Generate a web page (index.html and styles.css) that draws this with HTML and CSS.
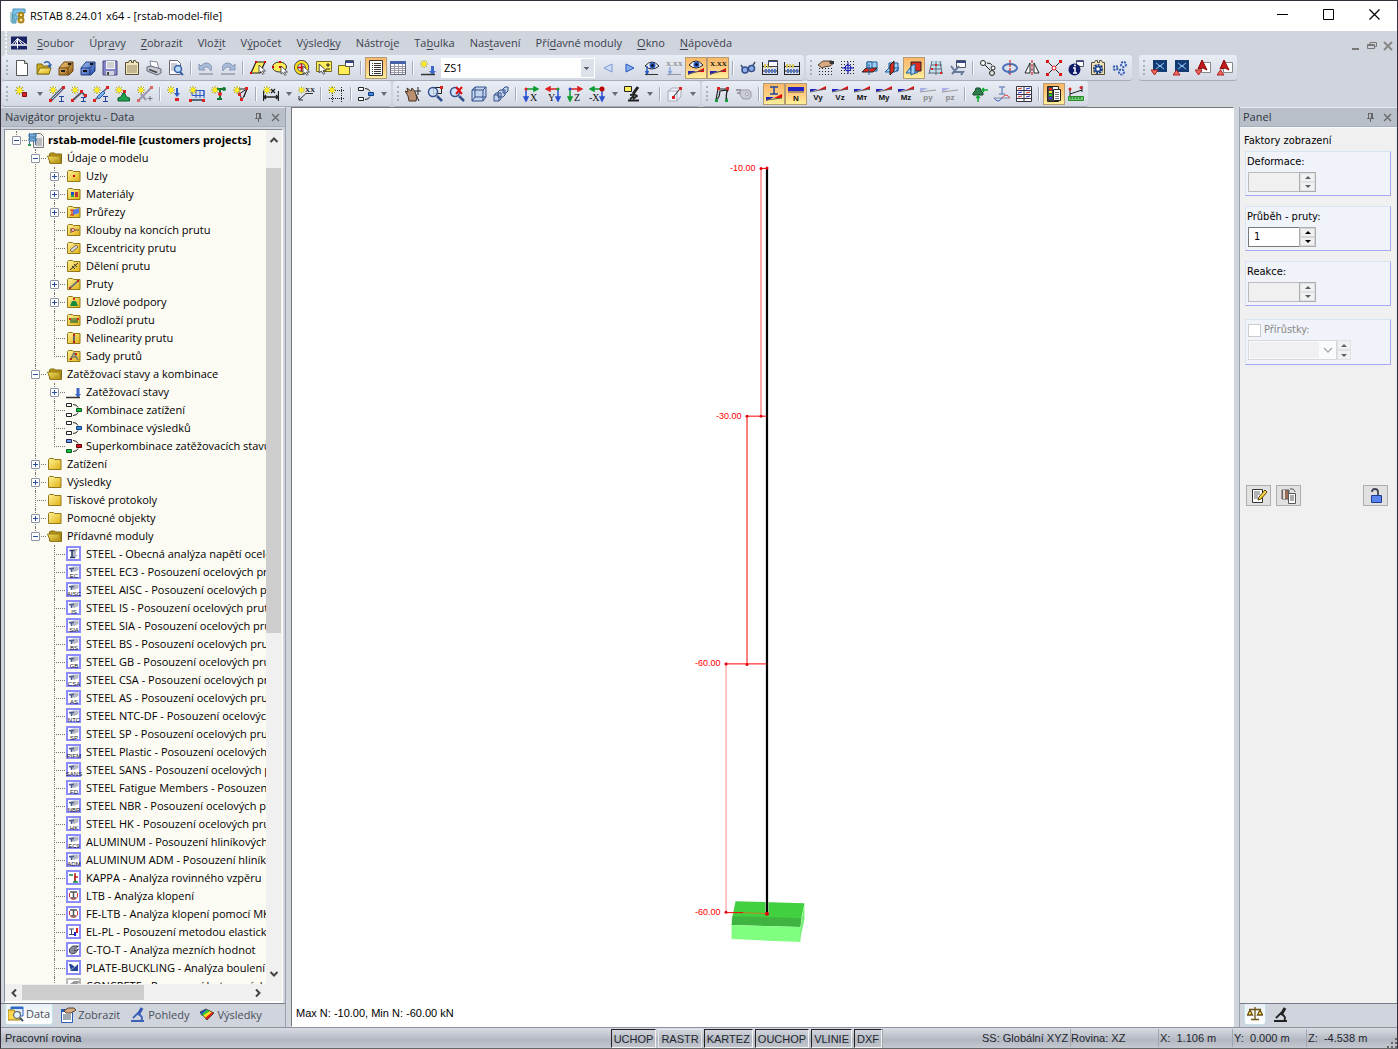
FILE: index.html
```html
<!DOCTYPE html>
<html lang="cs">

<head>
    <meta charset="UTF-8">
    <meta name="viewport" content="width=device-width, initial-scale=1.0">
    <title>RSTAB 8.24.01 x64 - [rstab-model-file]</title>
    <link rel="stylesheet" href="styles.css">
</head>

<body>
    <!-- Ikony -->
    <svg class="sprite" aria-hidden="true">
        <defs>
            <linearGradient id="gFolder" x1="0" y1="0" x2="1" y2="1">
                <stop offset="0" stop-color="#fff39a" />
                <stop offset="1" stop-color="#e0b010" />
            </linearGradient>
            <linearGradient id="gOpen" x1="0" y1="0" x2="1" y2="1">
                <stop offset="0" stop-color="#f7e060" />
                <stop offset="1" stop-color="#a88408" />
            </linearGradient>
            <linearGradient id="gBrown" x1="0" y1="0" x2="1" y2="1">
                <stop offset="0" stop-color="#ffd27a" />
                <stop offset="1" stop-color="#8a5510" />
            </linearGradient>
            <linearGradient id="gBlue" x1="0" y1="0" x2="1" y2="1">
                <stop offset="0" stop-color="#a9c4f5" />
                <stop offset="1" stop-color="#2148a8" />
            </linearGradient>
        </defs>

        <symbol id="star" viewBox="0 0 8 8"><path d="M4 0v8M0 4h8M1 1l6 6M7 1L1 7" stroke="#b5a800" /><circle cx="4" cy="4" r="2.2" fill="#ffee20" /></symbol>
        <symbol id="logo" viewBox="0 0 16 16"><path d="M3 1h12v4h-9v3h5v3H6v4H2z" fill="#7ec4e8" stroke="#4c8fb5" /><path d="M1 4v10M4 6v8" stroke="#4c9a9a" /><circle cx="11" cy="7" r="2.2" fill="#ffe680" stroke="#a8821a" stroke-width="2" /><circle cx="11" cy="12" r="2.5" fill="#ffe680" stroke="#a8821a" stroke-width="2" /></symbol>
        <symbol id="bridge" viewBox="0 0 16 13"><path d="M0 0h16v13H0z" fill="#1b2566" /><path d="M0 8.500h16" stroke="#fff" stroke-width="1.500" /><path d="M6.500 2v10M1 8l5.500-6L15 8M6.500 2L11 8M6.500 3L4 8" stroke="#fff" fill="none" /></symbol>
        <symbol id="new" viewBox="0 0 16 16"><path d="M2.500.5h8l3 3v12h-11z" fill="#fff" stroke="#555" /><path d="M10.500.5v3h3" fill="#ddd" stroke="#555" /></symbol>
        <symbol id="open" viewBox="0 0 16 16"><path d="M1 4h5l1 2h6v8H1z" fill="#c9a820" stroke="#80701a" /><path d="M1 14l3-6h11l-2 6z" fill="url(#gFolder)" stroke="#80701a" /><path d="M8 3q4-3 6 1v3M12 5l2 2 1-3" fill="none" stroke="#3565b0" stroke-width="1.5" /></symbol>
        <symbol id="cabBrown" viewBox="0 0 16 16"><path d="M1 8l5-6 9 0v9l-4 4H1z" fill="url(#gBrown)" stroke="#6d4512" /><path d="M1 8h9v7M10 8l5-6" fill="none" stroke="#6d4512" /><path d="M3 11h4M10 4h3" stroke="#222" stroke-width="2" /></symbol>
        <symbol id="cabBlue" viewBox="0 0 16 16"><path d="M1 8l5-6 9 0v9l-4 4H1z" fill="url(#gBlue)" stroke="#1e3c80" /><path d="M1 8h9v7M10 8l5-6" fill="none" stroke="#1e3c80" /><path d="M3 11h4M10 4h3" stroke="#111" stroke-width="2" /></symbol>
        <symbol id="save" viewBox="0 0 16 16"><path d="M1 1h14v14H1z" fill="#8484c8" stroke="#4c4c80" /><path d="M4 1h9v8H4z" fill="#f4f4f8" /><path d="M5 3h7M5 5h7M5 7h7" stroke="#aaa" /><path d="M4 11h8v4H4z" fill="#d4d4dc" /><path d="M5 12h2v3H5z" fill="#444" /></symbol>
        <symbol id="report" viewBox="0 0 16 16"><path d="M1.500 2.500h3l1-2h2v2h2v-2h2l1 2h2v12h-13z" fill="#f0e2bd" stroke="#554c33" /><path d="M3 6h10M3 8h10M3 10h10M3 12h10" stroke="#998b66" /></symbol>
        <symbol id="print" viewBox="0 0 16 16"><path d="M4 1l7 1 2 7-8-2z" fill="#fff" stroke="#889" /><path d="M1 7l4-1 10 3v4l-4 2L1 11z" fill="#c5cad5" stroke="#667" /><path d="M3 9.500l8 3" stroke="#444" stroke-width="1.500" /></symbol>
        <symbol id="preview" viewBox="0 0 16 16"><path d="M1.500.5h8l3 3v11h-11z" fill="#fff" stroke="#667" /><path d="M3 4h6M3 6h7M3 8h4M3 10h3" stroke="#99a" /><circle cx="10" cy="9" r="3.500" fill="#b8dcfa" stroke="#3560a8" stroke-width="1.500" /><path d="M12 12l3 3" stroke="#3560a8" stroke-width="2" /></symbol>
        <symbol id="undo" viewBox="0 0 16 16"><path d="M1 4v6h6L5 8q5-3 8 3 2-7-4-8-4 0-6 3z" fill="#a9bcda" stroke="#8698b5" /><path d="M1 14h14" stroke="#778" /></symbol>
        <symbol id="redo" viewBox="0 0 16 16"><path d="M15 4v6H9l2-2q-5-3-8 3-2-7 4-8 4 0 6 3z" fill="#a9bcda" stroke="#8698b5" /><path d="M1 14h14" stroke="#778" /></symbol>
        <symbol id="cursor" viewBox="0 0 8 10"><path d="M1 0v8l2-1.500 2 3 1-1-1.500-2.500h3z" fill="#fff" stroke="#333" stroke-width=".8" /></symbol>
        <symbol id="selArea" viewBox="0 0 16 16"><path d="M6 2h9l-5 11H1z" fill="#ffee58" stroke="#222" stroke-width="1.200" /><path d="M5 1h2v2H5zM14 1h2v2h-2zM0 12h2v2H0z" fill="#d00" /><use href="#cursor" x="8" y="5" width="8" height="10" /></symbol>
        <symbol id="selEllipse" viewBox="0 0 16 16"><ellipse cx="7.500" cy="7" rx="7" ry="5" fill="#ffee58" stroke="#333" /><path d="M7 1h2v2H7zM0 6h2v2H0zM7 6h2v2H7z" fill="#d00" /><use href="#cursor" x="8" y="6" width="8" height="10" /></symbol>
        <symbol id="selRing" viewBox="0 0 16 16"><circle cx="7.500" cy="7.500" r="5.500" fill="none" stroke="#333" stroke-width="4" /><circle cx="7.500" cy="7.500" r="5.500" fill="none" stroke="#ffdf20" stroke-width="2.500" /><path d="M7.500 4v7M4 7.500h7" stroke="#d00" stroke-width="1.500" /><use href="#cursor" x="8" y="6" width="8" height="10" /></symbol>
        <symbol id="selPm" viewBox="0 0 16 16"><path d="M.5 1.500h15v10H.5z" fill="#ffee58" stroke="#776c20" /><path d="M12 3v4M10 5h4M10 9h4" stroke="#222" /><use href="#cursor" x="2" y="4" width="9" height="11" /></symbol>
        <symbol id="selWin" viewBox="0 0 16 16"><path d="M.5 5.500h11v9H.5z" fill="#ffee58" stroke="#776c20" /><path d="M7.500.5h8v6h-8z" fill="#fff" stroke="#555" /><path d="M7 1h9v2H7z" fill="#34488a" /></symbol>
        <symbol id="list" viewBox="0 0 16 16"><path d="M1.500.5h13v15h-13z" fill="#fff" stroke="#333" /><path d="M4 3.500h1M4 5.500h1M4 7.500h1M4 9.500h1M4 11.500h1M4 13.500h1M6 3.500h7M6 5.500h7M6 7.500h7M6 9.500h7M6 11.500h7M6 13.500h7" stroke="#333" /></symbol>
        <symbol id="grid" viewBox="0 0 16 16"><path d="M.5 1.500h15v13H.5z" fill="#fff" stroke="#667" /><path d="M0 1h16v3H0z" fill="#4561a8" /><path d="M1 6.500h14M1 8.500h14M1 10.500h14M1 12.500h14M4.500 4v10M8.500 4v10M12.500 4v10" stroke="#99a" /></symbol>
        <symbol id="loadNew" viewBox="0 0 16 16"><use href="#star" width="8" height="8" /><path d="M11 6h3v5h2l-3.500 4L9 11h2z" fill="#3c68c8" /><path d="M1 14.500h14" stroke="#333" stroke-width="1.500" /></symbol>
        <symbol id="prev" viewBox="0 0 16 16"><path d="M12 4v8L4 8z" fill="#cfddf5" stroke="#7a9adb" /></symbol>
        <symbol id="next" viewBox="0 0 16 16"><path d="M4 4v8l8-4z" fill="#88aef0" stroke="#2456c0" /></symbol>
        <symbol id="eyeLoad" viewBox="0 0 16 16"><path d="M1 6q7-8 14 0-7 6-14 0z" fill="#f3f6ff" stroke="#222" /><circle cx="8.500" cy="5.500" r="3" fill="#2a5ac0" /><circle cx="8.500" cy="5.500" r="1.300" fill="#000" /><path d="M3 6v7M1.500 11L3 14l1.500-3" stroke="#2a5ac0" fill="none" stroke-width="1.500" /><path d="M1 14.500h13" stroke="#333" /></symbol>
        <symbol id="grayLoad" viewBox="0 0 16 16"><path d="M4 7v6M2.500 11L4 14l1.500-3" stroke="#8aa4dc" fill="none" stroke-width="1.500" /><path d="M1 14.500h14" stroke="#999" /></symbol>
        <symbol id="lowDiag" viewBox="0 0 16 16"><path d="M0 15v-4h8z" fill="#22b" /><path d="M8 12l8-4v4z" fill="#e00" /><path d="M0 14l16-4" stroke="#555" /></symbol>
        <symbol id="eyeDiag" viewBox="0 0 16 16"><path d="M1 5q7-8 14 0-7 6-14 0z" fill="#f3f6ff" stroke="#222" /><circle cx="8.500" cy="4.500" r="3" fill="#2a5ac0" /><circle cx="8.500" cy="4.500" r="1.300" fill="#000" /><use href="#lowDiag" width="16" height="16" /></symbol>
        <symbol id="glasses" viewBox="0 0 16 16"><path d="M1 5l3 5M15 2l-3 5" stroke="#456" fill="none" stroke-width="1.500" /><circle cx="5" cy="10" r="3" fill="#8fb0ea" stroke="#34508a" stroke-width="1.500" /><circle cx="11.500" cy="8.500" r="3" fill="#8fb0ea" stroke="#34508a" stroke-width="1.500" /></symbol>
        <symbol id="abacus" viewBox="0 0 16 16"><path d="M.5 2v13M15.500 2v13M0 6.500h16M0 11h16M0 14.500h16" stroke="#222" fill="none" /><path d="M3 4v4M6 4v4M9 4v4" stroke="#d8c860" stroke-width="2" /><path d="M4 9v4M7 9v4M10 9v4M13 9v4" stroke="#5578c0" stroke-width="2" /></symbol>
        <symbol id="abacusWin" viewBox="0 0 16 16"><use href="#abacus" width="16" height="16" /><path d="M6.500.5h9v6h-9z" fill="#fff" stroke="#444" /><path d="M6 1h10v1H6z" fill="#34488a" /></symbol>
        <symbol id="handGrid" viewBox="0 0 16 16"><path d="M1 8.500h15M1 11.500h15M1 14.500h15" stroke="#222" stroke-dasharray="1 2" /><path d="M0 5l5-4h9l2 2-4 3-6 1-2 1z" fill="#d9a982" stroke="#543" /><path d="M11 1h5v3h-4z" fill="#333" /></symbol>
        <symbol id="snapGrid" viewBox="0 0 16 16"><path d="M1 1.500h15M1 4.500h15M1 7.500h15M1 10.500h15M1 13.500h15" stroke="#222" stroke-dasharray="1 2" /><circle cx="8" cy="8" r="3" fill="#dfe6ff" stroke="#11a" /><path d="M8 2v12M2 8h12" stroke="#11a" /></symbol>
        <symbol id="planeXy" viewBox="0 0 16 16"><path d="M5 2h10v9H5z" fill="#9fd0f4" stroke="#1c5c9c" /><path d="M0 12l4-4h11l-4 4z" fill="#e02a20" stroke="#222" /><path d="M5 2h5v6H5z" fill="#9fd0f4" stroke="#1c5c9c" /><path d="M7 4v11" stroke="#1c5c9c" /></symbol>
        <symbol id="planeYz" viewBox="0 0 16 16"><path d="M5 3h9v8H5z" fill="#9fd0f4" stroke="#1c5c9c" /><path d="M1 12l4-4h10l-4 4z" fill="#9fd0f4" stroke="#1c5c9c" /><path d="M6 5l4-4v10l-4 4z" fill="#e02a20" stroke="#222" /></symbol>
        <symbol id="planeXz" viewBox="0 0 16 16"><path d="M0 13l4-5h11l-4 5z" fill="#9fd0f4" stroke="#1c5c9c" /><path d="M5 2h10v9H5z" fill="#e02a20" stroke="#222" /><path d="M5 6l4-2v9l-4 2z" fill="#9fd0f4" stroke="#1c5c9c" /></symbol>
        <symbol id="planeGrid" viewBox="0 0 16 16"><path d="M4 1h10l1 13H1z" fill="#bfe2ee" /><path d="M4 1l-3 13M8 1v14M12 1l2 13M3 5h11M2 9h12M1 13h14" stroke="#667" fill="none" /><path d="M7 4h2v2H7zM3 8h2v2H3zM12 12h2v2h-2z" fill="#d22" /></symbol>
        <symbol id="toolWin" viewBox="0 0 16 16"><path d="M6.500.5h9v7h-9z" fill="#fff" stroke="#556" /><path d="M6 1h10v2H6z" fill="#34488a" /><path d="M2 14l7-8M1 6l3 4M3 12h10l-2 3" stroke="#667a99" stroke-width="2" fill="none" /></symbol>
        <symbol id="moveCopy" viewBox="0 0 16 16"><circle cx="3" cy="3" r="2.500" fill="#fff" stroke="#222" /><circle cx="13" cy="8" r="2" fill="#fff" stroke="#222" /><circle cx="12" cy="13" r="2.500" fill="#ddd" stroke="#222" /><path d="M5 5l5 5M7 3q4 0 5 2" stroke="#222" fill="none" /></symbol>
        <symbol id="rotate" viewBox="0 0 16 16"><ellipse cx="8" cy="8" rx="7" ry="4" fill="none" stroke="#4a72b8" stroke-width="2" /><path d="M8 0v16" stroke="#c00" stroke-dasharray="3 1" /><path d="M6 14l4-2-4-2z" fill="#4a72b8" /></symbol>
        <symbol id="mirror" viewBox="0 0 16 16"><path d="M6 3v10H1zM10 3v10h5z" fill="#fff" stroke="#222" /><path d="M8 0v16" stroke="#c00" stroke-dasharray="3 1" /></symbol>
        <symbol id="cross" viewBox="0 0 16 16"><path d="M2 2l12 12M14 2L2 14" stroke="#222" /><path d="M0 0h3v3H0zM13 0h3v3h-3zM0 13h3v3H0zM13 13h3v3h-3z" fill="#d11" /><circle cx="8" cy="8" r="2" fill="#fff" stroke="#d11" /></symbol>
        <symbol id="info" viewBox="0 0 16 16"><path d="M8.500.5h7v6h-7z" fill="#fff" stroke="#556" /><path d="M8 1h8v1H8z" fill="#34488a" /><circle cx="6.500" cy="9.500" r="6" fill="#101c68" /><path d="M5 8h2v5M5 13h4" stroke="#fff" stroke-width="1.500" fill="none" /><circle cx="7" cy="5.500" r="1" fill="#fff" /></symbol>
        <symbol id="gearReport" viewBox="0 0 16 16"><use href="#report" width="16" height="16" /><circle cx="8" cy="9" r="4" fill="#fff" stroke="#1a4088" stroke-width="2" stroke-dasharray="2 1" /><circle cx="8" cy="9" r="2.500" fill="#fff" stroke="#1a4088" stroke-width="1.500" /></symbol>
        <symbol id="gears" viewBox="0 0 16 16"><g fill="#dce6ff" stroke="#3c60b0" stroke-width="2" stroke-dasharray="2 1"><circle cx="3.500" cy="8" r="2" /><circle cx="11.500" cy="4.500" r="2.500" /><circle cx="9.500" cy="12" r="2.500" /></g></symbol>
        <symbol id="cadImport" viewBox="0 0 16 16"><path d="M2 0h14v12H2z" fill="#143c74" /><path d="M5 3l8 6M13 3L5 9M7 6h4" stroke="#8cc4f4" /><path d="M0 10h7l-3.500 5z" fill="#f26a5c" stroke="#a22" /></symbol>
        <symbol id="cadExport" viewBox="0 0 16 16"><path d="M2 0h14v12H2z" fill="#143c74" /><path d="M5 3l8 6M13 3L5 9M7 6h4" stroke="#8cc4f4" /><path d="M0 15h7l-3.500-5z" fill="#f26a5c" stroke="#a22" /></symbol>
        <symbol id="acad" viewBox="0 0 16 16"><path d="M6.500 2.500h9v10h-9z" fill="#fff" stroke="#888" /><path d="M3 9l4-9 5 10-4-2z" fill="#c21c1c" stroke="#800" /></symbol>
        <symbol id="acadImport" viewBox="0 0 16 16"><use href="#acad" width="16" height="16" /><path d="M0 10h7l-3.500 5z" fill="#f26a5c" stroke="#a22" /></symbol>
        <symbol id="acadExport" viewBox="0 0 16 16"><use href="#acad" width="16" height="16" /><path d="M0 15h7l-3.500-5z" fill="#f26a5c" stroke="#a22" /></symbol>

        <symbol id="node" viewBox="0 0 16 16"><use href="#star" x="1" y="0" width="9" height="9" /><path d="M8.500 6.500h4v4h-4z" fill="#d22" stroke="#811" /></symbol>
        <symbol id="member" viewBox="0 0 16 16"><path d="M2 14L14 2" stroke="#556" stroke-width="3" /><path d="M2 14L14 2" stroke="#b8dcf5" /><use href="#star" width="8" height="8" /><path d="M13 0h3v3h-3zM0 13h3v3H0z" fill="#d22" /><path d="M10 10.500h5M12.500 10v5M10 15.500h5" stroke="#24449a" /></symbol>
        <symbol id="section" viewBox="0 0 16 16"><path d="M2 14L14 2" stroke="#556" stroke-width="1.500" /><path d="M4 11l6-6 2 2-6 6z" fill="#7ab4f0" stroke="#2a5ca8" /><use href="#star" width="8" height="8" /><path d="M13 0h3v3h-3zM0 13h3v3H0z" fill="#d22" /><path d="M10 10.500h5M12.500 10v5M10 15.500h5" stroke="#24449a" /></symbol>
        <symbol id="members" viewBox="0 0 16 16"><path d="M2 14l9-8 3 4" stroke="#556" stroke-width="2" fill="none" /><use href="#star" width="8" height="8" /><path d="M9 4h3v3H9zM0 13h3v3H0zM13 8h3v3h-3z" fill="#d22" /><path d="M10 11.500h5M12.500 11v4M10 15.500h5" stroke="#24449a" /></symbol>
        <symbol id="support" viewBox="0 0 16 16"><use href="#star" width="8" height="8" /><path d="M8 4h3v3H8z" fill="#d22" /><path d="M9.500 7l2 4 3 1v3H3v-3l3-1 2-4z" fill="#1fa04c" stroke="#0c5c28" /></symbol>
        <symbol id="memberGray" viewBox="0 0 16 16"><path d="M2 14L14 2M4 8l5 6" stroke="#99a" stroke-width="2" /><use href="#star" width="8" height="8" /><path d="M13 0h3v3h-3zM0 13h3v3H0z" fill="#d66" /><path d="M13 10v5M10.500 12.500h5" stroke="#778" /></symbol>
        <symbol id="nodeLoad" viewBox="0 0 16 16"><use href="#star" width="8" height="8" /><path d="M9 2h2v5h2l-3 4-3-4h2z" fill="#2b5cc8" /><path d="M8 12h4v3H8z" fill="#d22" /></symbol>
        <symbol id="memberLoad" viewBox="0 0 16 16"><path d="M3 4.500h12v5H3zM7 4v8M11 4v8M15 4v8" stroke="#2b5cc8" fill="none" /><use href="#star" width="8" height="8" /><path d="M2 14h12" stroke="#567" stroke-width="2" /><path d="M0 13h3v3H0zM13 13h3v3h-3z" fill="#d22" /></symbol>
        <symbol id="nodeDisp" viewBox="0 0 16 16"><path d="M6 3h8M9 4v9M6 13h5" stroke="#117a33" stroke-width="2" fill="none" /><use href="#star" width="8" height="8" /><circle cx="13" cy="3" r="2" fill="#117a33" /><circle cx="9" cy="8" r="2" fill="#d22" /></symbol>
        <symbol id="genLoad" viewBox="0 0 16 16"><path d="M5 3h9l-5 11zM6 8l8-5-3 8" stroke="#222" fill="none" /><use href="#star" width="8" height="8" /><path d="M12 1h3v3h-3zM7 12h3v3H7zM5 7h3v3H5z" fill="#d22" /></symbol>
        <symbol id="dim" viewBox="0 0 16 16"><path d="M.5 5v10M15.500 5v10M1 11h14M3 9l-2 2 2 2M13 9l2 2-2 2M8 3l4 4M12 3L8 7" stroke="#222" fill="none" stroke-width="1.300" /><use href="#star" width="8" height="8" /></symbol>
        <symbol id="comment" viewBox="0 0 16 16"><path d="M15 7.500H8L1 14M1 10v4h4" stroke="#333" fill="none" /><use href="#star" width="7" height="8" /></symbol>
        <symbol id="guide" viewBox="0 0 16 16"><path d="M1 4.500h15M1 12.500h15M4.500 1v15M13.500 1v15" stroke="#222" stroke-dasharray="1 1" fill="none" /><use href="#star" width="8" height="8" /></symbol>
        <symbol id="combo" viewBox="0 0 16 16"><path d="M.5 1.500h5v3h-5zM.5 11.500h5v3h-5z" fill="#fff" stroke="#222" /><path d="M7 2.500q4 0 5 3M7 13.500q4 0 5-3" stroke="#222" fill="none" /><path d="M10.500 6.500h5v3h-5z" fill="#3c8ce0" stroke="#113a80" /></symbol>
        <symbol id="hand" viewBox="0 0 16 16"><path d="M4 15l-1-5-3-5 3 1-1-4 4 3 1-3 3 4 2 5-1 4z" fill="#b98f70" stroke="#432" /><path d="M13 1v8M9.500 5h6.500M11 9l3 6" stroke="#222" /></symbol>
        <symbol id="zoomWin" viewBox="0 0 16 16"><path d="M6.500 1.500h8v6h-8z" fill="none" stroke="#222" /><circle cx="6" cy="6" r="4.500" fill="#cfe4fa" fill-opacity=".8" stroke="#34508a" stroke-width="1.500" /><path d="M10 10l5 5" stroke="#34508a" stroke-width="2.500" /><path d="M13 0h3v3h-3z" fill="#d22" /></symbol>
        <symbol id="zoomX" viewBox="0 0 16 16"><circle cx="6" cy="6" r="4.500" fill="#cfe4fa" stroke="#34508a" stroke-width="1.500" /><path d="M10 10l5 5" stroke="#34508a" stroke-width="2.500" /><path d="M7 1l6 7M13 1L7 8" stroke="#d11" stroke-width="2" /></symbol>
        <symbol id="cube" viewBox="0 0 16 16"><path d="M1 4l3-3h11v10l-3 4H1z" fill="#c3d4ee" stroke="#34508a" /><path d="M1 4h11v11M12 4l3-3M4 1v10h11M4 11l-3 4" fill="none" stroke="#34508a" /></symbol>
        <symbol id="cubes" viewBox="0 0 16 16"><path d="M10 3l2-2h3v4l-2 2h-3zM5 6l2-2h5v5l-2 2H5zM1 9l2-2h5v6l-2 2H1z" fill="#c3d4ee" stroke="#34508a" /><path d="M1 9h5v6" fill="none" stroke="#34508a" /></symbol>
        <symbol id="viewX" viewBox="0 0 16 16"><path d="M3 3h9M11 1l4 2-4 2z" stroke="#0c9c30" stroke-width="1.500" fill="#0c9c30" /><path d="M3 4v8M1 11l2 4 2-4z" stroke="#2a50d0" stroke-width="1.500" fill="#2a50d0" /><circle cx="3" cy="3" r="1.500" fill="#d22" /></symbol>
        <symbol id="viewY" viewBox="0 0 16 16"><path d="M13 3H4M5 1L1 3l4 2z" stroke="#d22" stroke-width="1.500" fill="#d22" /><path d="M13 4v8M11 11l2 4 2-4z" stroke="#2a50d0" stroke-width="1.500" fill="#2a50d0" /><circle cx="13" cy="3" r="1.500" fill="#0c9c30" /></symbol>
        <symbol id="viewZ" viewBox="0 0 16 16"><path d="M3 3h9M11 1l4 2-4 2z" stroke="#d22" stroke-width="1.500" fill="#d22" /><path d="M3 4v8M1 11l2 4 2-4z" stroke="#0c9c30" stroke-width="1.500" fill="#0c9c30" /><circle cx="3" cy="3" r="1.500" fill="#2a50d0" /></symbol>
        <symbol id="viewMx" viewBox="0 0 16 16"><path d="M13 3H4M5 1L1 3l4 2z" stroke="#0c9c30" stroke-width="1.500" fill="#0c9c30" /><path d="M13 4v8M11 11l2 4 2-4z" stroke="#2a50d0" stroke-width="1.500" fill="#2a50d0" /><circle cx="13" cy="3" r="2.500" fill="#b00" /></symbol>
        <symbol id="scopeNote" viewBox="0 0 16 16"><path d="M14 1l-5 7" stroke="#222" stroke-width="3" /><path d="M6 9q6-1 7 1l-4 3M4 14.500h11M6 13l4-3" stroke="#222" stroke-width="1.800" fill="none" /><path d="M.5.5h7v5h-7z" fill="#ffee58" stroke="#222" /></symbol>
        <symbol id="cubeEdit" viewBox="0 0 16 16"><path d="M1 5l4-3h9v8l-4 5H1zM1 5h9v10M10 5l4-3" fill="#eef2fa" stroke="#aab" /><path d="M6 11l7-8" stroke="#222" /><path d="M12 1h3v3h-3zM5 10h3v3H5z" fill="#d22" /></symbol>
        <symbol id="frame" viewBox="0 0 16 16"><path d="M2 14L4 3l9 0-1 11M3 14q3-4 3-9l8-1q-3 5-1 10" stroke="#222" fill="none" stroke-width="1.200" /><path d="M3 1h3v3H3zM12 1h3v3h-3z" fill="#d22" /><path d="M1 13h3v3H1zM11 13h3v3h-3z" fill="#199c3c" /></symbol>
        <symbol id="spray" viewBox="0 0 16 16"><path d="M4 4h9l2 2v5l-2 2H7L4 9z" fill="#c9ccd3" stroke="#99a" /><path d="M0 4h5M1 7h4" stroke="#99a" stroke-width="2" /><circle cx="11" cy="8" r="1.500" fill="#fff" stroke="#99a" /></symbol>
        <symbol id="secDiag" viewBox="0 0 16 16"><path d="M4 1h8M8 1v7M4 8h8" stroke="#24449a" stroke-width="1.500" /><path d="M0 15v-4h8z" fill="#22b" /><path d="M8 12l8-4v4z" fill="#e00" /><path d="M0 14l16-2" stroke="#555" /></symbol>
        <symbol id="diag" viewBox="0 0 16 16"><path d="M0 6V3h8z" fill="#2222c0" /><path d="M8 4l8-4v4z" fill="#e01010" /><path d="M0 6L16 3" stroke="#666" /></symbol>
        <symbol id="diagFlat" viewBox="0 0 16 16"><path d="M0 1h16v4H0z" fill="#2222c0" /><path d="M0 6h16" stroke="#555" /></symbol>
        <symbol id="diagGray" viewBox="0 0 16 16"><path d="M0 6V2h8z" fill="#aab0e8" /><path d="M0 6l16-2" stroke="#999" /></symbol>
        <symbol id="reaction" viewBox="0 0 16 16"><path d="M4 2h4l1 3 2 2v2H1V7l2-2z" fill="#2c7c4c" stroke="#154a2a" /><path d="M6 10v6M4 12l2-2 2 2M16 4h-5M12 2l-2 2 2 2" stroke="#0ca82c" stroke-width="1.500" fill="none" /></symbol>
        <symbol id="secWave" viewBox="0 0 16 16"><path d="M5 1h6M8 1v7M5 8h6" stroke="#7a92c4" stroke-width="1.500" /><path d="M0 12h16" stroke="#88a" /><path d="M0 12q4 6 8 0" stroke="#46c" fill="none" /><path d="M8 12q4-6 8 0" stroke="#d44" fill="none" /></symbol>
        <symbol id="tables" viewBox="0 0 16 16"><path d="M.5.5h15v15H.5zM8 0v16M0 4.500h16M0 8.500h16M0 12.500h16" fill="#fff" stroke="#334" /><path d="M2 3l4-1M10 7l4-1M2 11l4-1" stroke="#d22" /><path d="M10 3l4-1M2 7l4-1M10 11l4-1" stroke="#22c" /></symbol>
        <symbol id="colorPanel" viewBox="0 0 16 16"><path d="M1.500.5h11v15h-11z" fill="#fff" stroke="#222" /><path d="M2 1h5v14H2z" fill="#444" /><path d="M3 3h3" stroke="#e22" stroke-width="2" /><path d="M3 6h3" stroke="#ee2" stroke-width="2" /><path d="M3 9h3" stroke="#2c2" stroke-width="2" /><path d="M3 12h3" stroke="#24e" stroke-width="2" /><path d="M7.500 3.500h7v11h-7z" fill="#fff" stroke="#222" /><path d="M9 6.500h4M9 8.500h4M9 10.500h4M9 12.500h4" stroke="#777" /></symbol>
        <symbol id="ruler" viewBox="0 0 16 16"><path d="M2 8l12-4M2 4v6M14 0v6" stroke="#222" /><circle cx="2" cy="3" r="1.500" fill="#d22" /><circle cx="13" cy="1.500" r="1.500" fill="#d22" /><path d="M.5 10.500h15v4H.5z" fill="#6cd06c" stroke="#2a8a2a" /><path d="M3 11v2M6 11v2M9 11v2M12 11v2" stroke="#185a18" /></symbol>

        <symbol id="folder" viewBox="0 0 16 16"><path d="M1.500 3.500l1-1h4l1 1h6.500v10h-12.500z" fill="url(#gFolder)" stroke="#94791c" /></symbol>
        <symbol id="folderOpen" viewBox="0 0 16 16"><path d="M2.500 4l1-1h4l1 1h6v9h-12z" fill="#b8960c" stroke="#7e6914" /><path d="M3.500 13.500L.5 6h12l2 7.500z" fill="url(#gOpen)" stroke="#94791c" /></symbol>
        <symbol id="project" viewBox="0 0 16 16"><path d="M5.500 1.500h7l3 3v11h-10z" fill="#eee" stroke="#777" /><path d="M8 7h6M8 9h6M8 11h6M8 13h6" stroke="#888" /><path d="M1 2h7v3H1zM1 6h7v3H1z" fill="#7ab2dc" stroke="#3f75a8" /><path d="M1.500 1v13M7.500 1v12" stroke="#3f75a8" /><path d="M0 12h3v2H0z" fill="#2a9a5a" /></symbol>
        <symbol id="loadCase" viewBox="0 0 16 16"><path d="M10.500 4h3v6h1.500l-3 4-3-4h1.500z" fill="#3c68c8" /><path d="M0 13.500h14" stroke="#333" stroke-width="1.500" /></symbol>
        <symbol id="coG" viewBox="0 0 16 16"><path d="M.5 1.500h5v3h-5zM.5 11.500h5v3h-5z" fill="#fff" stroke="#222" /><path d="M7 2.500q4 0 5 3M7 13.500q4 0 5-3" stroke="#222" fill="none" /><path d="M10.500 6.500h5v3h-5z" fill="#18c040" stroke="#0a5c20" /></symbol>
        <symbol id="coR" viewBox="0 0 16 16"><path d="M.5 1.500h5v3h-5z" fill="#6aa4f4" stroke="#225" /><path d="M.5 11.500h5v3h-5z" fill="#18c040" stroke="#0a5c20" /><path d="M7 2.500q4 0 5 3M7 13.500q4 0 5-3" stroke="#222" fill="none" /><path d="M10.500 6.500h5v3h-5z" fill="#d01020" stroke="#600" /></symbol>
        <symbol id="mod" viewBox="0 0 16 16"><path d="M1 1h13v13H1z" fill="#fff" stroke="#8c8cff" stroke-width="2" /></symbol>
        <symbol id="beam" viewBox="0 0 16 16"><use href="#mod" width="16" height="16" /><path d="M5 4l4-1h3l-2 3v3h2l-3 3H6z" fill="#b4b8c4" /><path d="M3.500 4.500h5M6 5v6M4 11.500h5" stroke="#2a3c6c" stroke-width="1.500" /></symbol>
        <symbol id="beamTag" viewBox="0 0 16 16"><use href="#mod" width="16" height="16" /><path d="M3 5l4-2.500h5.500V6L8 8z" fill="#b4b8c4" /><path d="M3 4.500h5M5.500 5v3" stroke="#4a5c8c" stroke-width="1.500" /></symbol>
        <symbol id="kappa" viewBox="0 0 16 16"><use href="#mod" width="16" height="16" /><path d="M3 5h4M9 5v7M7 12h5" stroke="#148a3a" stroke-width="1.500" /><path d="M9 3v8M8 7h4" stroke="#c22" stroke-width="1.500" /></symbol>
        <symbol id="ltb" viewBox="0 0 16 16"><use href="#mod" width="16" height="16" /><path d="M4 4h7M7.500 4v6M5 10h5" stroke="#555" stroke-width="1.500" /><path d="M3.500 5v4q4 5 8 0V5" stroke="#c33" fill="none" /></symbol>
        <symbol id="elpl" viewBox="0 0 16 16"><use href="#mod" width="16" height="16" /><path d="M3 5h5M5.500 5v5M3 10.500h5" stroke="#446" /><path d="M8 8h2v4H8z" fill="#22c" /><path d="M10 4h2v5h-2z" fill="#d22" /></symbol>
        <symbol id="ctot" viewBox="0 0 16 16"><use href="#mod" width="16" height="16" /><path d="M3.500 7l3-3h6l-4 4v1l4-2-3 4-4 1-2-2z" fill="#888c98" stroke="#445" /></symbol>
        <symbol id="plate" viewBox="0 0 16 16"><use href="#mod" width="16" height="16" /><path d="M3 4h2l4 3 3-3v7H5z" fill="#24449a" /><path d="M4 11l7-6" stroke="#9ab" /></symbol>
        <symbol id="concrete" viewBox="0 0 16 16"><path d="M1 1h13v13H1z" fill="#fff" stroke="#bbb" stroke-width="2" /><path d="M4 6l4-3h6l-3 4H5z" fill="#999" /></symbol>

        <symbol id="navData" viewBox="0 0 16 16"><path d="M3 1h12v9H3z" fill="#dce8fa" stroke="#3068c8" /><path d="M3 1h12v2H3z" fill="#3068c8" /><path d="M0 4h6l1 2h5v8H0z" fill="#ffd84c" stroke="#a07c10" /><circle cx="9" cy="9" r="3.500" fill="#e6f4ff" stroke="#456" /><path d="M12 12l3 3" stroke="#456" stroke-width="2" /></symbol>
        <symbol id="navShow" viewBox="0 0 16 16"><path d="M1.500 2.500h11v13h-11z" fill="#fff" stroke="#2a5cb8" /><path d="M1 2h12v3H1z" fill="#2a5cb8" /><path d="M3 8h8M3 10h8M3 12h8" stroke="#456" /><path d="M4 4l4-3h6l2 2-5 3H6z" fill="#d9a982" stroke="#543" /></symbol>
        <symbol id="navView" viewBox="0 0 16 16"><path d="M12 1L8 8" stroke="#2f56b0" stroke-width="3" /><path d="M3 11l5-5 3 3q2 2 0 5M1 14h13" stroke="#3c62b8" stroke-width="1.800" fill="none" /></symbol>
        <symbol id="navRes" viewBox="0 0 16 16"><path d="M1 5l6-3 8 4-7 7z" fill="#ffdf20" /><path d="M1 5l6-3 1 1-6 5z" fill="#2050e0" /><path d="M8 3l3 1-8 5-1-1z" fill="#20c040" /><path d="M15 6l-7 7-2-2 7-6z" fill="#e02020" /><path d="M1 5l6-3 8 4-7 7z" fill="none" stroke="#333" stroke-width=".8" /></symbol>
        <symbol id="scales" viewBox="0 0 16 16"><path d="M8 1v12M4 13.500h8M2 3.500h12M3 4L.5 9h5zM13 4l-2.500 5h5z" stroke="#6c5414" fill="#ffe050" stroke-width="1.300" /></symbol>
        <symbol id="scope" viewBox="0 0 16 16"><path d="M12 1L8 8" stroke="#222" stroke-width="3" /><path d="M3 11l5-5 3 3q2 2 0 5M1 14h13" stroke="#222" stroke-width="1.800" fill="none" /></symbol>
        <symbol id="edit" viewBox="0 0 16 16"><path d="M1.500 1.500h10v13h-10z" fill="#fff" stroke="#333" /><path d="M3 4h6M3 6h6M3 8h4M3 10h4" stroke="#667" /><path d="M7 12l1-3 6-7 2 2-6 7z" fill="#ffd840" stroke="#554010" /></symbol>
        <symbol id="copyFrom" viewBox="0 0 16 16"><path d="M1 2h7v9H1z" fill="#9c6c54" stroke="#555" /><path d="M3 2v9" stroke="#ddd" stroke-width="2" /><path d="M7.500 5.500h7v10h-7z" fill="#fff" stroke="#555" /><path d="M9 8h4M9 10h4M9 12h4M9 1q4-1 5 3" stroke="#555" fill="none" /></symbol>
        <symbol id="lock" viewBox="0 0 16 16"><path d="M10 8V4q0-3-3-3T4 4" stroke="#445" stroke-width="1.800" fill="none" /><path d="M3.500 7.500h10v7h-10z" fill="#5a84ee" stroke="#1c3c90" /></symbol>
        <symbol id="pin" viewBox="0 0 9 9"><path d="M2.500 0v5M2 .5h5M5.500 0v5M6.500 0v5M1 5.500h7M4.500 6v3" stroke="#666" fill="none" /></symbol>
        <symbol id="x" viewBox="0 0 9 9"><path d="M1 1l7 7M8 1L1 8" stroke="#666" stroke-width="1.300" /></symbol>
        <symbol id="chev" viewBox="0 0 10 10"><path d="M1.500 7L5 3.500 8.500 7" stroke="#444" stroke-width="2" fill="none" /></symbol>
    </svg>

    <div class="window">
        <header class="titlebar">
            <svg class="icon"><use href="#logo" /></svg>
            <h1>RSTAB 8.24.01 x64 - [rstab-model-file]</h1>
            <div class="win-buttons">
                <button aria-label="Minimalizovat"><svg width="11" height="11"><path d="M0 5.500h11" stroke="#000" /></svg></button>
                <button aria-label="Maximalizovat"><svg width="11" height="11"><path d="M.5.5h10v10H.5z" stroke="#000" fill="none" /></svg></button>
                <button aria-label="Zavřít"><svg width="11" height="11"><path d="M.5.5l10 10M10.500.5l-10 10" stroke="#000" stroke-width="1.200" /></svg></button>
            </div>
        </header>

        <nav class="menubar">
            <svg class="icon"><use href="#bridge" /></svg>
            <a href="#"><u>S</u>oubor</a>
            <a href="#">Úpr<u>a</u>vy</a>
            <a href="#"><u>Z</u>obrazit</a>
            <a href="#">Vlož<u>i</u>t</a>
            <a href="#">V<u>ý</u>počet</a>
            <a href="#">Výsled<u>k</u>y</a>
            <a href="#">Nástro<u>j</u>e</a>
            <a href="#">Ta<u>b</u>ulka</a>
            <a href="#">Nas<u>t</u>avení</a>
            <a href="#">Pří<u>d</u>avné moduly</a>
            <a href="#"><u>O</u>kno</a>
            <a href="#"><u>N</u>ápověda</a>
            <div class="doc-buttons">
                <button aria-label="Minimalizovat okno"><svg width="10" height="10"><path d="M1 8h7" stroke="#777" stroke-width="2" /></svg></button>
                <button aria-label="Obnovit okno"><svg width="10" height="10"><path d="M3 3V1.500h6.500v4H8M.5 3.500h7v4h-7zM.5 4.500h7" stroke="#777" fill="none" /></svg></button>
                <button aria-label="Zavřít okno"><svg width="10" height="10"><path d="M1 1l8 8M9 1L1 9" stroke="#888" stroke-width="2" /></svg></button>
            </div>
        </nav>

        <div class="toolbars">
            <div class="toolbar">
                <button aria-label="Nový"><svg class="icon"><use href="#new" /></svg></button>
                <button aria-label="Otevřít"><svg class="icon"><use href="#open" /></svg></button>
                <button aria-label="Projekt"><svg class="icon"><use href="#cabBrown" /></svg></button>
                <button aria-label="Bloky"><svg class="icon"><use href="#cabBlue" /></svg></button>
                <button aria-label="Uložit"><svg class="icon"><use href="#save" /></svg></button>
                <button aria-label="Protokol"><svg class="icon"><use href="#report" /></svg></button>
                <button aria-label="Tisk"><svg class="icon"><use href="#print" /></svg></button>
                <button aria-label="Náhled"><svg class="icon"><use href="#preview" /></svg></button>
                <span class="sep"></span>
                <button aria-label="Zpět"><svg class="icon"><use href="#undo" /></svg></button>
                <button aria-label="Znovu"><svg class="icon"><use href="#redo" /></svg></button>
                <span class="sep"></span>
                <button aria-label="Výběr rovnoběžníkem"><svg class="icon"><use href="#selArea" /></svg></button>
                <button aria-label="Výběr elipsou"><svg class="icon"><use href="#selEllipse" /></svg></button>
                <button aria-label="Výběr prstencem"><svg class="icon"><use href="#selRing" /></svg></button>
                <button aria-label="Přidat k výběru"><svg class="icon"><use href="#selPm" /></svg></button>
                <button aria-label="Zvláštní výběr"><svg class="icon"><use href="#selWin" /></svg></button>
                <span class="sep"></span>
                <button class="active" aria-label="Navigátor"><svg class="icon"><use href="#list" /></svg></button>
                <button aria-label="Tabulka"><svg class="icon"><use href="#grid" /></svg></button>
                <span class="sep"></span>
                <button aria-label="Nový zatěžovací stav"><svg class="icon"><use href="#loadNew" /></svg></button>
                <select class="load-select" aria-label="Zatěžovací stav">
                    <option>ZS1</option>
                </select>
                <button aria-label="Předchozí"><svg class="icon"><use href="#prev" /></svg></button>
                <button aria-label="Další"><svg class="icon"><use href="#next" /></svg></button>
                <button aria-label="Zobrazit zatížení"><svg class="icon"><use href="#eyeLoad" /></svg></button>
                <button aria-label="Hodnoty zatížení"><svg class="icon" viewBox="0 0 16 16"><use href="#grayLoad" /><text x="0" y="6" class="svg-serif dim">X.XX</text></svg></button>
                <button class="active" aria-label="Zobrazit výsledky"><svg class="icon"><use href="#eyeDiag" /></svg></button>
                <button class="active" aria-label="Hodnoty výsledků"><svg class="icon" viewBox="0 0 16 16"><use href="#lowDiag" /><text x="0" y="6" class="svg-serif">X.XX</text></svg></button>
                <span class="sep"></span>
                <button aria-label="Parametry"><svg class="icon"><use href="#glasses" /></svg></button>
                <button aria-label="Spočítat"><svg class="icon"><use href="#abacusWin" /></svg></button>
                <button aria-label="Spočítat vše"><svg class="icon"><use href="#abacus" /></svg></button>
            </div>
            <div class="toolbar">
                <button aria-label="Pracovní rovina"><svg class="icon"><use href="#handGrid" /></svg></button>
                <button aria-label="Rastr"><svg class="icon"><use href="#snapGrid" /></svg></button>
                <button aria-label="Rovina XY"><svg class="icon"><use href="#planeXy" /></svg></button>
                <button aria-label="Rovina YZ"><svg class="icon"><use href="#planeYz" /></svg></button>
                <button class="active" aria-label="Rovina XZ"><svg class="icon"><use href="#planeXz" /></svg></button>
                <button aria-label="Vlastní rovina"><svg class="icon"><use href="#planeGrid" /></svg></button>
                <button aria-label="Nastavení roviny"><svg class="icon"><use href="#toolWin" /></svg></button>
                <span class="sep"></span>
                <button aria-label="Kopírovat"><svg class="icon"><use href="#moveCopy" /></svg></button>
                <button aria-label="Otočit"><svg class="icon"><use href="#rotate" /></svg></button>
                <button aria-label="Zrcadlit"><svg class="icon"><use href="#mirror" /></svg></button>
                <button aria-label="Spojit pruty"><svg class="icon"><use href="#cross" /></svg></button>
                <button aria-label="Informace"><svg class="icon"><use href="#info" /></svg></button>
                <button aria-label="Vlastnosti zobrazení"><svg class="icon"><use href="#gearReport" /></svg></button>
                <button aria-label="Možnosti"><svg class="icon"><use href="#gears" /></svg></button>
            </div>
            <div class="toolbar spaced">
                <button aria-label="Import Tekla"><svg class="icon"><use href="#cadImport" /></svg></button>
                <button aria-label="Export Tekla"><svg class="icon"><use href="#cadExport" /></svg></button>
                <button aria-label="Import AutoCAD"><svg class="icon"><use href="#acadImport" /></svg></button>
                <button aria-label="Export AutoCAD"><svg class="icon"><use href="#acadExport" /></svg></button>
            </div>
        </div>

        <div class="toolbars">
            <div class="toolbar">
                <button aria-label="Nový uzel"><svg class="icon"><use href="#node" /></svg></button>
                <button class="drop" aria-label="Další typy uzlů"></button>
                <button aria-label="Nový prut"><svg class="icon"><use href="#member" /></svg></button>
                <button aria-label="Spojité pruty"><svg class="icon"><use href="#members" /></svg></button>
                <button aria-label="Nový průřez"><svg class="icon"><use href="#section" /></svg></button>
                <button aria-label="Nová podpora"><svg class="icon"><use href="#support" /></svg></button>
                <button aria-label="Nová sada prutů"><svg class="icon"><use href="#memberGray" /></svg></button>
                <span class="sep"></span>
                <button aria-label="Zatížení na uzel"><svg class="icon"><use href="#nodeLoad" /></svg></button>
                <button aria-label="Zatížení na prut"><svg class="icon"><use href="#memberLoad" /></svg></button>
                <button aria-label="Deformace uzlu"><svg class="icon"><use href="#nodeDisp" /></svg></button>
                <button aria-label="Generovat zatížení"><svg class="icon"><use href="#genLoad" /></svg></button>
                <span class="sep"></span>
                <button aria-label="Kóta"><svg class="icon"><use href="#dim" /></svg></button>
                <button class="drop" aria-label="Další kóty"></button>
                <button aria-label="Komentář"><svg class="icon" viewBox="0 0 16 16"><use href="#comment" /><text x="7" y="6" class="svg-serif">XX</text></svg></button>
                <span class="sep"></span>
                <button aria-label="Vodicí linie"><svg class="icon"><use href="#guide" /></svg></button>
                <span class="sep"></span>
                <button aria-label="Kombinace"><svg class="icon"><use href="#combo" /></svg></button>
                <button class="drop" aria-label="Další kombinace"></button>
            </div>
            <div class="toolbar">
                <button aria-label="Posun"><svg class="icon"><use href="#hand" /></svg></button>
                <button aria-label="Zvětšit oknem"><svg class="icon"><use href="#zoomWin" /></svg></button>
                <button aria-label="Zobrazit vše"><svg class="icon"><use href="#zoomX" /></svg></button>
                <button aria-label="Izometrie"><svg class="icon"><use href="#cube" /></svg></button>
                <button aria-label="Předchozí pohled"><svg class="icon"><use href="#cubes" /></svg></button>
                <span class="sep"></span>
                <button aria-label="Pohled X"><svg class="icon" viewBox="0 0 16 16"><use href="#viewX" /><text x="7" y="15" class="svg-axis">X</text></svg></button>
                <button aria-label="Pohled Y"><svg class="icon" viewBox="0 0 16 16"><use href="#viewY" /><text x="3" y="15" class="svg-axis">Y</text></svg></button>
                <button aria-label="Pohled Z"><svg class="icon" viewBox="0 0 16 16"><use href="#viewZ" /><text x="7" y="15" class="svg-axis">Z</text></svg></button>
                <button aria-label="Pohled -X"><svg class="icon" viewBox="0 0 16 16"><use href="#viewMx" /><text x="0" y="15" class="svg-axis">-X</text></svg></button>
                <button class="drop" aria-label="Další pohledy"></button>
                <button aria-label="Viditelnost"><svg class="icon"><use href="#scopeNote" /></svg></button>
                <button class="drop" aria-label="Další viditelnosti"></button>
                <span class="sep"></span>
                <button aria-label="Řez"><svg class="icon"><use href="#cubeEdit" /></svg></button>
                <button class="drop" aria-label="Další řezy"></button>
            </div>
            <div class="toolbar">
                <button aria-label="Deformace"><svg class="icon"><use href="#frame" /></svg></button>
                <button aria-label="Renderování"><svg class="icon"><use href="#spray" /></svg></button>
                <span class="sep"></span>
                <button class="active" aria-label="Průběhy"><svg class="icon"><use href="#secDiag" /></svg></button>
                <button class="active" aria-label="N"><svg class="icon" viewBox="0 0 16 16"><use href="#diagFlat" /><text x="8" y="15" class="svg-f">N</text></svg></button>
                <button aria-label="Vy"><svg class="icon" viewBox="0 0 16 16"><use href="#diag" /><text x="8" y="14" class="svg-f">Vy</text></svg></button>
                <button aria-label="Vz"><svg class="icon" viewBox="0 0 16 16"><use href="#diag" /><text x="8" y="14" class="svg-f">Vz</text></svg></button>
                <button aria-label="MT"><svg class="icon" viewBox="0 0 16 16"><use href="#diag" /><text x="8" y="14" class="svg-f">Mт</text></svg></button>
                <button aria-label="My"><svg class="icon" viewBox="0 0 16 16"><use href="#diag" /><text x="8" y="14" class="svg-f">My</text></svg></button>
                <button aria-label="Mz"><svg class="icon" viewBox="0 0 16 16"><use href="#diag" /><text x="8" y="14" class="svg-f">Mz</text></svg></button>
                <button aria-label="py"><svg class="icon" viewBox="0 0 16 16"><use href="#diagGray" /><text x="8" y="14" class="svg-f dim">py</text></svg></button>
                <button aria-label="pz"><svg class="icon" viewBox="0 0 16 16"><use href="#diagGray" /><text x="8" y="14" class="svg-f dim">pz</text></svg></button>
                <span class="sep"></span>
                <button aria-label="Reakce"><svg class="icon"><use href="#reaction" /></svg></button>
                <button aria-label="Napětí"><svg class="icon"><use href="#secWave" /></svg></button>
                <button aria-label="Tabulky výsledků"><svg class="icon"><use href="#tables" /></svg></button>
                <span class="sep"></span>
                <button class="active" aria-label="Panel"><svg class="icon"><use href="#colorPanel" /></svg></button>
                <button aria-label="Měřit"><svg class="icon"><use href="#ruler" /></svg></button>
            </div>
        </div>

        <main class="workspace">
            <!-- Navigátor projektu -->
            <aside class="navigator">
                <div class="dock-header">
                    <h2>Navigátor projektu - Data</h2>
                    <button aria-label="Připnout"><svg><use href="#pin" /></svg></button>
                    <button aria-label="Zavřít panel"><svg><use href="#x" /></svg></button>
                </div>
                <div class="tree-frame">
                    <div class="tree-view">
                        <ul class="tree">
                            <li>
                                <div class="row"><span class="slot"><button class="exp" aria-label="Sbalit"></button></span><svg class="icon"><use href="#project" /></svg><b>rstab-model-file [customers projects]</b></div>
                                <ul>
                                    <li>
                                        <div class="row"><span class="slot"><button class="exp" aria-label="Sbalit"></button></span><svg class="icon"><use href="#folderOpen" /></svg>Údaje o modelu</div>
                                        <ul>
                                            <li><div class="row"><span class="slot"><button class="exp plus" aria-label="Rozbalit"></button></span><svg class="icon" viewBox="0 0 16 16"><use href="#folder" /><path d="M7 7h2v2H7z" fill="#d00" /></svg>Uzly</div></li>
                                            <li><div class="row"><span class="slot"><button class="exp plus" aria-label="Rozbalit"></button></span><svg class="icon" viewBox="0 0 16 16"><use href="#folder" /><path d="M5 6h3v3H5z" fill="#24c" /><path d="M5 9h3v2H5z" fill="#2a4" /><path d="M9 6h3v5H9z" fill="#b33" /></svg>Materiály</div></li>
                                            <li><div class="row"><span class="slot"><button class="exp plus" aria-label="Rozbalit"></button></span><svg class="icon" viewBox="0 0 16 16"><use href="#folder" /><path d="M7 6l6-2v5l-6 2z" fill="#5a7ce8" /><path d="M4 6h4M6 6v5M4 11h4" stroke="#c22" /></svg>Průřezy</div></li>
                                            <li><div class="row"><span class="slot"></span><svg class="icon" viewBox="0 0 16 16"><use href="#folder" /><path d="M5 6v5M6 8h7" stroke="#555" /><circle cx="7" cy="8" r="1.500" fill="#fff" stroke="#a33" /></svg>Klouby na koncích prutu</div></li>
                                            <li><div class="row"><span class="slot"></span><svg class="icon" viewBox="0 0 16 16"><use href="#folder" /><path d="M4 10l6-5 2 2-6 5z" fill="#ddd" stroke="#765" /></svg>Excentricity prutu</div></li>
                                            <li><div class="row"><span class="slot"></span><svg class="icon" viewBox="0 0 16 16"><use href="#folder" /><path d="M4 12l8-7M6 8l3 3M8 6l3 3" stroke="#333" /></svg>Dělení prutu</div></li>
                                            <li><div class="row"><span class="slot"><button class="exp plus" aria-label="Rozbalit"></button></span><svg class="icon" viewBox="0 0 16 16"><use href="#folder" /><path d="M4 12l8-7" stroke="#777" stroke-width="2" /><path d="M3 11h2v2H3zM11 4h2v2h-2z" fill="#b22" /></svg>Pruty</div></li>
                                            <li><div class="row"><span class="slot"><button class="exp plus" aria-label="Rozbalit"></button></span><svg class="icon" viewBox="0 0 16 16"><use href="#folder" /><path d="M6 7h4l2 5H4z" fill="#1a8a3c" /><path d="M7 4h2v2H7z" fill="#d22" /></svg>Uzlové podpory</div></li>
                                            <li><div class="row"><span class="slot"></span><svg class="icon" viewBox="0 0 16 16"><use href="#folder" /><path d="M4 7h9M5 8v3M7 8v3M9 8v3M11 8v3" stroke="#175c30" stroke-width="1.200" /><path d="M3 6h2v2H3zM11 6h2v2h-2z" fill="#d22" /></svg>Podloží prutu</div></li>
                                            <li><div class="row"><span class="slot"></span><svg class="icon" viewBox="0 0 16 16"><use href="#folder" /><path d="M8 4v9" stroke="#666" stroke-width="2" /><path d="M7 4h2v2H7zM7 11h2v2H7z" fill="#b22" /></svg>Nelinearity prutu</div></li>
                                            <li><div class="row"><span class="slot"></span><svg class="icon" viewBox="0 0 16 16"><use href="#folder" /><path d="M4 12l4-7 4 7M5 9h6" stroke="#777" stroke-width="1.500" fill="none" /><path d="M9 5h2v2H9zM4 10h2v2H4z" fill="#b22" /></svg>Sady prutů</div></li>
                                        </ul>
                                    </li>
                                    <li>
                                        <div class="row"><span class="slot"><button class="exp" aria-label="Sbalit"></button></span><svg class="icon"><use href="#folderOpen" /></svg>Zatěžovací stavy a kombinace</div>
                                        <ul>
                                            <li><div class="row"><span class="slot"><button class="exp plus" aria-label="Rozbalit"></button></span><svg class="icon"><use href="#loadCase" /></svg>Zatěžovací stavy</div></li>
                                            <li><div class="row"><span class="slot"></span><svg class="icon"><use href="#coG" /></svg>Kombinace zatížení</div></li>
                                            <li><div class="row"><span class="slot"></span><svg class="icon"><use href="#combo" /></svg>Kombinace výsledků</div></li>
                                            <li><div class="row"><span class="slot"></span><svg class="icon"><use href="#coR" /></svg>Superkombinace zatěžovacích stavů</div></li>
                                        </ul>
                                    </li>
                                    <li><div class="row"><span class="slot"><button class="exp plus" aria-label="Rozbalit"></button></span><svg class="icon"><use href="#folder" /></svg>Zatížení</div></li>
                                    <li><div class="row"><span class="slot"><button class="exp plus" aria-label="Rozbalit"></button></span><svg class="icon"><use href="#folder" /></svg>Výsledky</div></li>
                                    <li><div class="row"><span class="slot"></span><svg class="icon"><use href="#folder" /></svg>Tiskové protokoly</div></li>
                                    <li><div class="row"><span class="slot"><button class="exp plus" aria-label="Rozbalit"></button></span><svg class="icon"><use href="#folder" /></svg>Pomocné objekty</div></li>
                                    <li>
                                        <div class="row"><span class="slot"><button class="exp" aria-label="Sbalit"></button></span><svg class="icon"><use href="#folderOpen" /></svg>Přídavné moduly</div>
                                        <ul>
                                            <li><div class="row"><span class="slot"></span><svg class="icon"><use href="#beam" /></svg>STEEL - Obecná analýza napětí ocelových prutů</div></li>
                                            <li><div class="row"><span class="slot"></span><svg class="icon" viewBox="0 0 16 16"><use href="#beamTag" /><text x="8" y="14" class="tag">EC</text></svg>STEEL EC3 - Posouzení ocelových prutů</div></li>
                                            <li><div class="row"><span class="slot"></span><svg class="icon" viewBox="0 0 16 16"><use href="#beamTag" /><text x="8" y="14" class="tag">AISC</text></svg>STEEL AISC - Posouzení ocelových prutů</div></li>
                                            <li><div class="row"><span class="slot"></span><svg class="icon" viewBox="0 0 16 16"><use href="#beamTag" /><text x="8" y="14" class="tag">IS</text></svg>STEEL IS - Posouzení ocelových prutů</div></li>
                                            <li><div class="row"><span class="slot"></span><svg class="icon" viewBox="0 0 16 16"><use href="#beamTag" /><text x="8" y="14" class="tag">SIA</text></svg>STEEL SIA - Posouzení ocelových prutů</div></li>
                                            <li><div class="row"><span class="slot"></span><svg class="icon" viewBox="0 0 16 16"><use href="#beamTag" /><text x="8" y="14" class="tag">BS</text></svg>STEEL BS - Posouzení ocelových prutů</div></li>
                                            <li><div class="row"><span class="slot"></span><svg class="icon" viewBox="0 0 16 16"><use href="#beamTag" /><text x="8" y="14" class="tag">GB</text></svg>STEEL GB - Posouzení ocelových prutů</div></li>
                                            <li><div class="row"><span class="slot"></span><svg class="icon" viewBox="0 0 16 16"><use href="#beamTag" /><text x="8" y="14" class="tag">CSA</text></svg>STEEL CSA - Posouzení ocelových prutů</div></li>
                                            <li><div class="row"><span class="slot"></span><svg class="icon" viewBox="0 0 16 16"><use href="#beamTag" /><text x="8" y="14" class="tag">AS</text></svg>STEEL AS - Posouzení ocelových prutů</div></li>
                                            <li><div class="row"><span class="slot"></span><svg class="icon" viewBox="0 0 16 16"><use href="#beamTag" /><text x="8" y="14" class="tag">NTC</text></svg>STEEL NTC-DF - Posouzení ocelových prutů</div></li>
                                            <li><div class="row"><span class="slot"></span><svg class="icon" viewBox="0 0 16 16"><use href="#beamTag" /><text x="8" y="14" class="tag">SP</text></svg>STEEL SP - Posouzení ocelových prutů</div></li>
                                            <li><div class="row"><span class="slot"></span><svg class="icon" viewBox="0 0 16 16"><use href="#beamTag" /><text x="8" y="14" class="tag">PIFM</text></svg>STEEL Plastic - Posouzení ocelových prutů</div></li>
                                            <li><div class="row"><span class="slot"></span><svg class="icon" viewBox="0 0 16 16"><use href="#beamTag" /><text x="8" y="14" class="tag">SANS</text></svg>STEEL SANS - Posouzení ocelových prutů</div></li>
                                            <li><div class="row"><span class="slot"></span><svg class="icon" viewBox="0 0 16 16"><use href="#beamTag" /><text x="8" y="14" class="tag">FD</text></svg>STEEL Fatigue Members - Posouzení na únavu</div></li>
                                            <li><div class="row"><span class="slot"></span><svg class="icon" viewBox="0 0 16 16"><use href="#beamTag" /><text x="8" y="14" class="tag">NBR</text></svg>STEEL NBR - Posouzení ocelových prutů</div></li>
                                            <li><div class="row"><span class="slot"></span><svg class="icon" viewBox="0 0 16 16"><use href="#beamTag" /><text x="8" y="14" class="tag">HK</text></svg>STEEL HK - Posouzení ocelových prutů</div></li>
                                            <li><div class="row"><span class="slot"></span><svg class="icon" viewBox="0 0 16 16"><use href="#beamTag" /><text x="8" y="14" class="tag">EC9</text></svg>ALUMINUM - Posouzení hliníkových prutů</div></li>
                                            <li><div class="row"><span class="slot"></span><svg class="icon" viewBox="0 0 16 16"><use href="#beamTag" /><text x="8" y="14" class="tag">ADM</text></svg>ALUMINUM ADM - Posouzení hliníkových prutů</div></li>
                                            <li><div class="row"><span class="slot"></span><svg class="icon"><use href="#kappa" /></svg>KAPPA - Analýza rovinného vzpěru</div></li>
                                            <li><div class="row"><span class="slot"></span><svg class="icon"><use href="#ltb" /></svg>LTB - Analýza klopení</div></li>
                                            <li><div class="row"><span class="slot"></span><svg class="icon"><use href="#ltb" /></svg>FE-LTB - Analýza klopení pomocí MKP</div></li>
                                            <li><div class="row"><span class="slot"></span><svg class="icon"><use href="#elpl" /></svg>EL-PL - Posouzení metodou elasticky-plasticky</div></li>
                                            <li><div class="row"><span class="slot"></span><svg class="icon"><use href="#ctot" /></svg>C-TO-T - Analýza mezních hodnot</div></li>
                                            <li><div class="row"><span class="slot"></span><svg class="icon"><use href="#plate" /></svg>PLATE-BUCKLING - Analýza boulení</div></li>
                                            <li><div class="row"><span class="slot"></span><svg class="icon"><use href="#concrete" /></svg>CONCRETE - Posouzení betonových prutů</div></li>
                                        </ul>
                                    </li>
                                </ul>
                            </li>
                        </ul>
                    </div>
                    <div class="scroll-v">
                        <button aria-label="Nahoru"><svg><use href="#chev" /></svg></button>
                        <div class="thumb"></div>
                        <button aria-label="Dolů"><svg class="down"><use href="#chev" /></svg></button>
                    </div>
                    <div class="scroll-h">
                        <button aria-label="Vlevo"><svg class="left"><use href="#chev" /></svg></button>
                        <div class="thumb"></div>
                        <button aria-label="Vpravo"><svg class="right"><use href="#chev" /></svg></button>
                    </div>
                </div>
                <div class="tabs">
                    <button class="current"><svg class="icon"><use href="#navData" /></svg>Data</button>
                    <button><svg class="icon"><use href="#navShow" /></svg>Zobrazit</button>
                    <button><svg class="icon"><use href="#navView" /></svg>Pohledy</button>
                    <button><svg class="icon"><use href="#navRes" /></svg>Výsledky</button>
                </div>
            </aside>

            <!-- Model s průběhem normálových sil -->
            <section class="canvas">
                <svg class="model" viewBox="-1 0 942 917">
                    <path d="M443 793l69 2-4 20-69-2z" fill="#40d040" />
                    <path d="M440 808l69 2-1 9-69-2z" fill="#40b440" />
                    <path d="M439 817l69 2v15l-69-3z" fill="#80ff80" />
                    <path d="M508 819l4-24v16l-5 23z" fill="#70f070" />
                    <path d="M474.500 60v745" stroke="#c8c8c8" stroke-width="3" />
                    <path d="M474.500 59v746" stroke="#000" stroke-width="2" />
                    <g fill="none" stroke="#f00">
                        <path d="M474 59.500h-6M468 307.500h6M454 307.500h14M454 555.500h20M433 555.500h21M433 804.500h18" />
                        <path d="M468.500 59v248" stroke="#ff5050" />
                        <path d="M454.500 307v248" />
                        <path d="M433.500 555v249" stroke="#ff8c8c" />
                    </g>
                    <path d="M451 804.500l24 1" stroke="#c08020" />
                    <g fill="#e00010">
                        <circle cx="474.500" cy="59" r="1.500" /><circle cx="468.500" cy="59.500" r="1.500" /><circle cx="468.500" cy="307.500" r="1.500" />
                        <circle cx="454.500" cy="307.500" r="1.500" /><circle cx="454.500" cy="556" r="1.500" /><circle cx="433.500" cy="555.500" r="1.500" />
                        <circle cx="433.500" cy="804" r="1.500" /><circle cx="474.500" cy="805.500" r="2" />
                    </g>
                    <g class="values">
                        <text x="463" y="62">-10.00</text>
                        <text x="449" y="310">-30.00</text>
                        <text x="428" y="558">-60.00</text>
                        <text x="428" y="807">-60.00</text>
                    </g>
                </svg>
                <p>Max N: -10.00, Min N: -60.00 kN</p>
            </section>

            <!-- Ovládací panel -->
            <aside class="panel">
                <div class="dock-header">
                    <h2>Panel</h2>
                    <button aria-label="Připnout"><svg><use href="#pin" /></svg></button>
                    <button aria-label="Zavřít panel"><svg><use href="#x" /></svg></button>
                </div>
                <div class="panel-body">
                    <h3>Faktory zobrazení</h3>
                    <div class="group">
                        <label for="deformace">Deformace:</label>
                        <div class="spin">
                            <input type="text" id="deformace" disabled>
                            <div class="arrows"><button disabled aria-label="Více"></button><button disabled aria-label="Méně"></button></div>
                        </div>
                    </div>
                    <div class="group">
                        <label for="prubeh">Průběh - pruty:</label>
                        <div class="spin">
                            <input type="text" id="prubeh" value="1">
                            <div class="arrows"><button aria-label="Více"></button><button aria-label="Méně"></button></div>
                        </div>
                    </div>
                    <div class="group">
                        <label for="reakce">Reakce:</label>
                        <div class="spin">
                            <input type="text" id="reakce" disabled>
                            <div class="arrows"><button disabled aria-label="Více"></button><button disabled aria-label="Méně"></button></div>
                        </div>
                    </div>
                    <div class="group increments">
                        <label><input type="checkbox" disabled>Přírůstky:</label>
                        <div class="spin">
                            <div class="combo">
                                <select disabled aria-label="Přírůstky"></select>
                                <svg width="10" height="6"><path d="M1 1l4 4 4-4" stroke="#aaa" stroke-width="1.300" fill="none" /></svg>
                            </div>
                            <div class="arrows"><button disabled aria-label="Více"></button><button disabled aria-label="Méně"></button></div>
                        </div>
                    </div>
                    <div class="panel-tools">
                        <button aria-label="Upravit"><svg class="icon"><use href="#edit" /></svg></button>
                        <button aria-label="Kopírovat nastavení"><svg class="icon"><use href="#copyFrom" /></svg></button>
                        <button aria-label="Odemknout"><svg class="icon"><use href="#lock" /></svg></button>
                    </div>
                </div>
                <div class="tabs">
                    <button class="current" aria-label="Faktory"><svg class="icon"><use href="#scales" /></svg></button>
                    <button aria-label="Filtr"><svg class="icon"><use href="#scope" /></svg></button>
                </div>
            </aside>
        </main>

        <footer class="statusbar">
            <span class="hint">Pracovní rovina</span>
            <div class="modes">
                <button class="on">UCHOP</button>
                <button>RASTR</button>
                <button class="on">KARTEZ</button>
                <button class="on">OUCHOP</button>
                <button class="on">VLINIE</button>
                <button class="on">DXF</button>
            </div>
            <span class="cs">SS: Globální XYZ</span>
            <span class="plane">Rovina: XZ</span>
            <span class="coord">X: &nbsp;1.106 m</span>
            <span class="coord">Y: &nbsp;0.000 m</span>
            <span class="coord last">Z: &nbsp;-4.538 m</span>
            <svg class="grip" width="10" height="10"><path d="M8 1h2M8 5h2M8 9h2M4 5h2M4 9h2M0 9h2" stroke="#666" stroke-width="2" /></svg>
        </footer>
    </div>
</body>

</html>
```
FILE: styles.css
```css
* {
    box-sizing: border-box;
}

body {
    margin: 0;
    font-family: "Open Sans", "Noto Sans", sans-serif;
    font-size: 11px;
    line-height: 18px;
    color: #000;
}

h1,
h2,
h3,
p,
ul {
    margin: 0;
    padding: 0;
    font-size: inherit;
    font-weight: normal;
    list-style: none;
}

button {
    border: 0;
    padding: 0;
    background: none;
    color: inherit;
    font: inherit;
    flex: none;
}

.sprite {
    position: absolute;
    width: 0;
    height: 0;
}

.icon {
    width: 16px;
    height: 16px;
    flex: none;
    fill: none;
    overflow: visible;
}

text {
    fill: #111;
}

.svg-serif {
    font: bold 7px "Liberation Serif", serif;
}

.svg-axis {
    font: 10px "Liberation Serif", serif;
}

.svg-f {
    font: bold 8px "Liberation Sans", sans-serif;
    text-anchor: middle;
}

.dim {
    fill: #888;
}

.tag {
    font: 6px "Liberation Sans", sans-serif;
    text-anchor: middle;
}

.window {
    display: flex;
    flex-direction: column;
    height: 100vh;
    background: #cfd4dd;
    border: 1px solid #35303c;
    border-bottom-color: #666;
}

/* Titulek */
.titlebar {
    display: flex;
    align-items: center;
    flex: none;
    height: 30px;
    padding-left: 9px;
    background: #fff;
}

.titlebar h1 {
    flex: 1;
    padding-left: 4px;
}

.win-buttons {
    display: flex;
}

.win-buttons button {
    width: 46px;
    height: 30px;
}

/* Menu */
.menubar {
    display: flex;
    align-items: center;
    height: 24px;
    flex: none;
    margin-left: 4px;
    padding-left: 4px;
    gap: 15px;
    border-left: 2px dotted #f4f6fa;
    color: #3c424e;
}

.menubar .icon {
    margin-right: -5px;
}

.menubar a {
    color: inherit;
    text-decoration: none;
}

.menubar u {
    text-underline-offset: 2px;
}

.doc-buttons {
    display: flex;
    gap: 6px;
    margin-left: auto;
    padding: 6px 4px 0 0;
}

.doc-buttons button {
    height: 10px;
    line-height: 0;
}

/* Panely nástrojů */
.toolbars {
    display: flex;
    flex: none;
    gap: 2px;
    height: 26px;
    padding-left: 1px;
}

.toolbar {
    position: relative;
    display: flex;
    padding: 2px 1px 1px 9px;
    height: 26px;
    background: linear-gradient(#e9edf5, #d3d8e3);
    border-bottom: 1px solid #a7acb8;
    border-radius: 3px;
}

.toolbar::before {
    content: "";
    position: absolute;
    left: 4px;
    top: 5px;
    height: 15px;
    border-left: 2px dotted #a9afbb;
}

.toolbar.spaced {
    margin-left: 5px;
}

.toolbar button {
    display: flex;
    align-items: center;
    justify-content: center;
    width: 22px;
    height: 22px;
}

.toolbar .active {
    background: linear-gradient(#fbb868, #fdcc80 50%, #fff09a);
    border: 1px solid #b59a72;
}

.toolbar .drop {
    width: 13px;
}

.drop::before {
    content: "";
    border: 3px solid transparent;
    border-top: 4px solid #666c78;
    border-bottom: 0;
}

.sep {
    width: 2px;
    height: 14px;
    margin: 4px 3px;
    background: #a4aab6;
    border-right: 1px solid #f7f9fc;
}

.load-select {
    width: 154px;
    height: 20px;
    margin: 1px 2px 0;
    padding: 0 2px;
    border: 1px solid #fff;
    border-radius: 0;
    appearance: none;
    font: inherit;
    color: #000;
    background: linear-gradient(#5c6270, #5c6270) no-repeat 142px 8px / 5px 1px,
        linear-gradient(#5c6270, #5c6270) no-repeat 143px 9px / 3px 1px,
        linear-gradient(#5c6270, #5c6270) no-repeat 144px 10px / 1px 1px,
        linear-gradient(#dde1e9, #dde1e9) no-repeat right / 13px 100%, #fff;
}

/* Pracovní plocha */
.workspace {
    display: flex;
    flex: 1;
    min-height: 0;
}

.navigator {
    display: flex;
    flex-direction: column;
    width: 285px;
    flex: none;
    border-right: 1px solid #9ba1ad;
}

.dock-header {
    display: flex;
    align-items: center;
    flex: none;
    gap: 8px;
    height: 20px;
    padding: 0 5px 0 4px;
    background: #b9bfc9;
    border-top: 1px solid #e6e9f0;
    border-bottom: 1px solid #a9afba;
    color: #30353f;
}

.dock-header h2 {
    flex: 1;
}

.dock-header button {
    height: 9px;
    line-height: 0;
}

.dock-header svg {
    width: 9px;
    height: 9px;
}

.tree-frame {
    display: grid;
    grid-template: minmax(0, 1fr) 17px / minmax(0, 1fr) 16px;
    flex: 1;
    min-height: 0;
    margin: 2px 2px 0 3px;
    background: #f0f0f0;
    border: 1px solid #8a8f9a;
    border-right-color: #fff;
    border-bottom: 2px solid #fff;
}

.tree-view {
    overflow: hidden;
    background: #fcfbf3;
    padding: 1px 0 0 2px;
}

.tree li {
    position: relative;
    white-space: nowrap;
}

.tree ul {
    margin-left: 19px;
}

.tree li::before {
    content: "";
    position: absolute;
    left: 9px;
    top: 0;
    bottom: 0;
    border-left: 1px dotted #777;
}

.tree li:last-child::before {
    bottom: auto;
    height: 10px;
}

.row {
    display: flex;
    align-items: center;
    height: 18px;
}

.row .icon {
    margin: 0 4px 0 2px;
}

.slot {
    position: relative;
    display: flex;
    width: 19px;
    height: 18px;
    flex: none;
    padding: 5px 0 0 5px;
}

.slot::before {
    content: "";
    position: absolute;
    left: 11px;
    right: -1px;
    top: 9px;
    border-top: 1px dotted #777;
}

.exp {
    position: relative;
    width: 9px;
    height: 9px;
    border: 1px solid #8c95a5;
    border-radius: 1px;
    background: linear-gradient(#2b4fa0, #2b4fa0) no-repeat center / 5px 1px, #fff;
}

.exp.plus {
    background: linear-gradient(#2b4fa0, #2b4fa0) no-repeat center / 5px 1px,
        linear-gradient(#2b4fa0, #2b4fa0) no-repeat center / 1px 5px, #fff;
}

.scroll-v {
    display: flex;
    flex-direction: column;
}

.scroll-v button {
    height: 20px;
    line-height: 0;
}

.scroll-v .thumb {
    flex: 0 1 465px;
    margin: 18px 1px auto 0;
    background: #cdcdcd;
}

.scroll-h {
    display: flex;
    align-items: center;
}

.scroll-h button {
    width: 17px;
    line-height: 0;
}

.scroll-h .thumb {
    width: 122px;
    height: 15px;
    margin-right: auto;
    background: #cdcdcd;
}

.tree-frame button svg {
    width: 10px;
    height: 10px;
}

.down {
    transform: rotate(180deg);
}

.left {
    transform: rotate(-90deg);
}

.right {
    transform: rotate(90deg);
}

.tabs {
    display: flex;
    flex: none;
    gap: 4px;
    height: 24px;
    padding: 0 4px 2px;
    border-top: 1px solid #777d88;
    color: #4a505c;
}

.tabs button {
    display: flex;
    align-items: center;
    gap: 2px;
    padding: 0 3px;
}

.tabs .current {
    background: linear-gradient(#e9f0f4, #fff);
    border: 1px solid #c3e4ea;
    border-top: 0;
    border-radius: 0 0 3px 3px;
    padding: 0 2px;
}

.canvas {
    position: relative;
    flex: 1;
    min-width: 0;
    margin: 0 5px;
    background: #fff;
    border: 1px solid #777;
    border-right-color: #fff;
    border-bottom-color: #fff;
}

.model {
    display: block;
    width: 100%;
    height: 100%;
}

.values {
    font: 9px "Liberation Sans", Arial, sans-serif;
    text-anchor: end;
}

.values text {
    fill: #f00;
}

.canvas p {
    position: absolute;
    left: 4px;
    bottom: 4px;
    font-family: "Liberation Sans", Arial, sans-serif;
}

/* Panel */
.panel {
    display: flex;
    flex-direction: column;
    width: 158px;
    flex: none;
    border-left: 1px solid #9ba1ad;
}

.panel .dock-header {
    padding-left: 3px;
}

.panel-body {
    flex: 1;
    padding: 4px 5px 0 5px;
    background: #f0f0f0;
    border-top: 1px solid #f8f9fb;
    border-right: 1px solid #dde3f0;
    font-family: "DejaVu Sans Condensed", "DejaVu Sans", sans-serif;
}

.panel-body h3 {
    height: 19px;
    margin-left: -1px;
}

.group {
    height: 45px;
    margin-bottom: 10px;
    padding: 0 1px;
    background: #f0f3f9;
    border: 1px solid #d9e4f3;
    border-right-color: #a8a8f0;
    border-bottom-color: #a8a8f0;
}

.group label {
    display: flex;
    align-items: center;
    gap: 3px;
    height: 20px;
}

.increments {
    height: 46px;
    margin-top: 13px;
}

.increments label {
    padding-left: 1px;
    color: #888;
}

.increments input {
    appearance: none;
    width: 13px;
    height: 13px;
    margin: 0;
    background: #fff;
    border: 1px solid #ccc;
}

.spin {
    display: flex;
    height: 20px;
    padding-left: 1px;
}

.spin input {
    width: 51px;
    padding: 0 5px;
    background: #fff;
    border: 1px solid #7a7a7a;
    border-right: 0;
    font: inherit;
}

.spin input:disabled {
    background: #f0f0f0;
    border-color: #bbb;
}

.arrows {
    display: flex;
    flex-direction: column;
    width: 17px;
    border: 1px solid #adadad;
}

.arrows button {
    display: flex;
    align-items: center;
    justify-content: center;
    flex: 1;
    background: #f0f0f0;
    border: 1px solid #d6d6d6;
}

.arrows button::before {
    content: "";
    border: 3px solid transparent;
    border-bottom-color: #000;
    border-top: 0;
}

.arrows button:last-child::before {
    border: 3px solid transparent;
    border-top-color: #000;
    border-bottom: 0;
}

.arrows button:disabled {
    opacity: .6;
}

.combo {
    position: relative;
    width: 89px;
}

.combo select {
    appearance: none;
    width: 100%;
    height: 20px;
    border: 1px solid #ccc;
    border-radius: 0;
    background: linear-gradient(#f0f0f0, #f0f0f0) no-repeat 1px 1px / 69px 16px, #fff;
}

.combo svg {
    position: absolute;
    right: 4px;
    top: 7px;
}

.increments .arrows {
    width: 14px;
    border: 0;
}

.panel-tools {
    display: flex;
    gap: 5px;
    margin: 120px 3px 0 1px;
}

.panel-tools button {
    display: flex;
    align-items: center;
    justify-content: center;
    width: 25px;
    height: 21px;
    background: #e1e1e1;
    border: 1px solid #adadad;
}

.panel-tools button:last-child {
    margin-left: auto;
}

/* Stavový řádek */
.statusbar {
    display: flex;
    align-items: center;
    flex: none;
    height: 21px;
    padding-left: 4px;
    background: linear-gradient(#d9dce2, #b2b7c1 60%, #c5c9d1);
    border-top: 1px solid #8d939e;
    font-family: "Liberation Sans", Arial, sans-serif;
    color: #22262e;
}

.hint {
    flex: 1;
}

.modes {
    display: flex;
    gap: 2px;
    margin-right: 99px;
    border-right: 1px solid #a0a5af;
}

.modes button {
    height: 19px;
    padding: 0 2px;
    border: 1px solid #e6e8ec;
}

.modes .on {
    border-color: #222 #f4f4f4 #f4f4f4 #222;
}

.cs {
    width: 88px;
}

.plane {
    width: 88px;
    border-left: 1px solid #a0a5af;
}

.coord {
    width: 74px;
    padding-left: 1px;
    border-left: 1px solid #a0a5af;
}

.coord.last {
    width: 81px;
}

.grip {
    align-self: flex-end;
    flex: none;
}
```
